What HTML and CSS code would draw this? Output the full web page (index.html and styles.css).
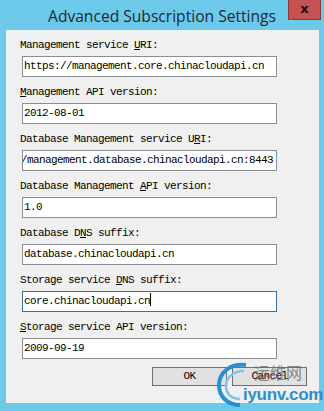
FILE: index.html
```html
<!DOCTYPE html>
<html lang="en">
<head>
    <meta charset="UTF-8">
    <meta name="viewport" content="width=device-width, initial-scale=1.0">
    <title>Advanced Subscription Settings</title>
    <link rel="stylesheet" href="styles.css">
</head>
<body>
    <div class="window">
        <div class="titlebar">
            <div class="title">Advanced Subscription Settings</div>
            <div class="close">x</div>
        </div>

        <div class="client">
            <div class="field">
                <div class="label">Management service <u>U</u>RI:</div>
                <div class="textbox"><span class="value">https://management.core.chinacloudapi.cn</span></div>
            </div>
            <div class="field">
                <div class="label"><u>M</u>anagement API version:</div>
                <div class="textbox"><span class="value">2012-08-01</span></div>
            </div>
            <div class="field">
                <div class="label">Database Management service U<u>R</u>I:</div>
                <div class="textbox"><span class="value scrolled">https://management.database.chinacloudapi.cn:8443</span></div>
            </div>
            <div class="field">
                <div class="label">Database Management <u>A</u>PI version:</div>
                <div class="textbox"><span class="value">1.0</span></div>
            </div>
            <div class="field">
                <div class="label">Database D<u>N</u>S suffix:</div>
                <div class="textbox"><span class="value">database.chinacloudapi.cn</span></div>
            </div>
            <div class="field">
                <div class="label">Storage service <u>D</u>NS suffix:</div>
                <div class="textbox focused"><span class="value">core.chinacloudapi.cn</span><span class="caret"></span></div>
            </div>
            <div class="field">
                <div class="label"><u>S</u>torage service API version:</div>
                <div class="textbox"><span class="value">2009-09-19</span></div>
            </div>

            <div class="buttons">
                <div class="button">OK</div>
                <div class="button">Cancel</div>
            </div>
        </div>

        <!-- watermark -->
        <div class="watermark">
            <svg class="swirl" width="34" height="46" viewBox="0 0 34 46">
                <path d="M30 4 C14 2 3 12 3 24 C3 36 12 44 24 44" fill="none" stroke="#2a8fd0" stroke-width="4"/>
                <path d="M28 10 C17 10 10 17 10 25 C10 33 16 38 24 38" fill="none" stroke="#7cc4ec" stroke-width="2.5"/>
            </svg>
            <div class="wm-cn">运维网</div>
            <div class="wm-en">iyunv.com</div>
        </div>
    </div>
</body>
</html>
```

FILE: styles.css
```css
body {
    margin: 0;
    background: #6cc9ea;
}
.window {
    position: relative;
    width: 324px;
    height: 411px;
    background: #6cc9ea;
    overflow: hidden;
}
.titlebar {
    display: flex;
    height: 30px;
    padding-left: 36px;
}
.title {
    flex: 1;
    text-align: center;
    font-family: "Open Sans", "Noto Sans", sans-serif;
    font-size: 15.6px;
    line-height: 30px;
    color: #1d2b33;
    padding-top: 1px;
}
.close {
    width: 31px;
    height: 19px;
    margin-right: 3px;
    background: #c75050;
    border: 1px solid #8a3a3a;
    border-top: none;
    color: #1a1010;
    font-family: "DejaVu Sans", sans-serif;
    font-weight: bold;
    font-size: 13px;
    line-height: 17px;
    text-align: center;
}
.client {
    margin: 0 5px 8px 6px;
    height: 373px;
    background: #f0f0f0;
    padding: 8px 0 0 14px;
    box-sizing: border-box;
    font-family: "Liberation Mono", monospace;
    font-size: 11px;
    letter-spacing: -0.6px;
    color: #000;
}
.field {
    margin-bottom: 8px;
}
.label {
    height: 14px;
    line-height: 14px;
    margin-bottom: 4px;
}
.label u {
    text-underline-offset: 1px;
}
.textbox {
    width: 255px;
    height: 21px;
    margin-left: 2px;
    box-sizing: border-box;
    background: #fff;
    border: 1px solid #8b8f94;
    overflow: hidden;
    white-space: nowrap;
    line-height: 19px;
    padding-left: 1px;
}
.textbox.focused {
    border-color: #3d6f99;
}
.value.scrolled {
    display: inline-block;
    margin-left: -45px;
}
.caret {
    display: inline-block;
    width: 1px;
    height: 13px;
    background: #000;
    vertical-align: -2px;
}
.buttons {
    display: flex;
    gap: 5px;
    margin-top: 7px;
    padding-left: 132px;
}
.button {
    width: 75px;
    height: 19px;
    box-sizing: border-box;
    background: #e1e1e1;
    border: 1px solid #707070;
    text-align: center;
    line-height: 17px;
}
.watermark {
    position: absolute;
    left: 216px;
    top: 360px;
    width: 106px;
    height: 48px;
}
.swirl {
    position: absolute;
    left: 0;
    top: 1px;
}
.wm-cn {
    position: absolute;
    left: 38px;
    top: 2px;
    font-family: "Noto Sans CJK SC", sans-serif;
    font-size: 16px;
    line-height: 20px;
    color: rgba(110, 110, 110, 0.8);
}
.wm-en {
    position: absolute;
    left: 27px;
    top: 25px;
    font-family: "Liberation Sans", Arial, sans-serif;
    font-weight: bold;
    font-size: 17px;
    line-height: 20px;
    color: #2a8fd0;
    letter-spacing: -0.3px;
}
```
